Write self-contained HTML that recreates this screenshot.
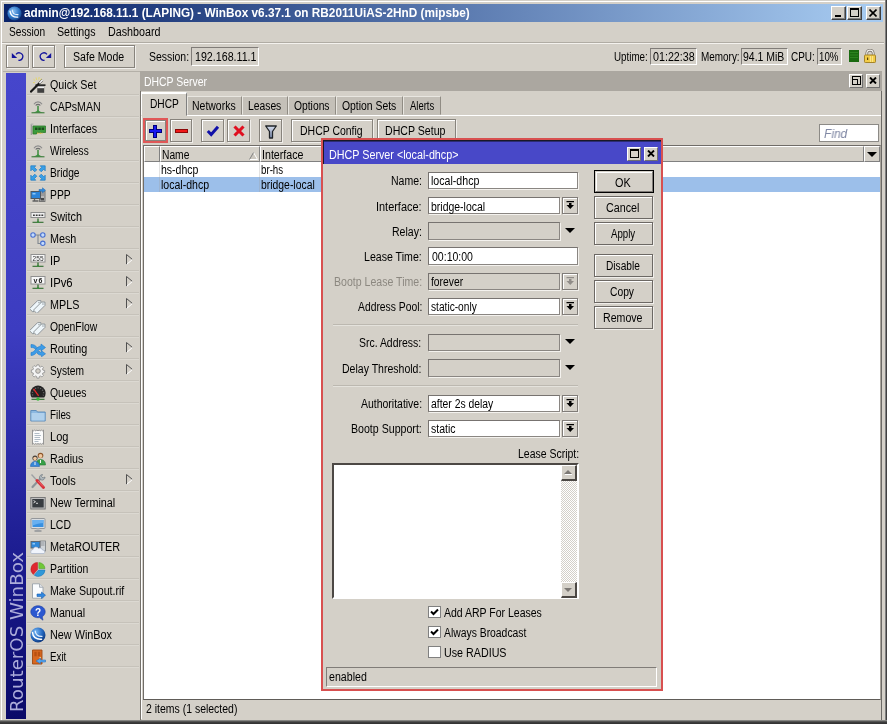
<!DOCTYPE html><html><head><meta charset="utf-8"><title>WinBox</title><style>
*{box-sizing:border-box}
html,body{margin:0;padding:0}
body{width:887px;height:724px;overflow:hidden;position:relative;background:#d4d0c8;font-family:"Liberation Sans",sans-serif;font-size:12px;color:#000;line-height:14px}
#root{position:absolute;left:0;top:0;width:887px;height:724px;will-change:transform}
.a{position:absolute}
.t{position:absolute;white-space:nowrap;line-height:14px;height:14px;transform-origin:0 0}
.btn{position:absolute;background:#d4d0c8;border:1px solid #87837c;box-shadow:inset 1px 1px 0 #fff,1px 1px 0 #f0eeea}
.db{border-color:#6c6864}
.sunk{position:absolute;border:1px solid;border-color:#777370 #8a8682 #8a8682 #777370;background:#fff;box-shadow:1px 1px 0 #f4f2ee}
.sk{position:absolute;border:1px solid;border-color:#807c78 #fff #fff #807c78;background:#d4d0c8}
.sunk2{position:absolute;border:2px solid;border-color:#4c4844 #fff #fff #4c4844;border-right-width:2px;background:#fff}
.dis{background:#d4d0c8}
#frameR{left:884px;top:0;width:3px;height:724px;background:linear-gradient(90deg,#d4d0c8 0,#d4d0c8 1px,#808080 1px,#808080 2px,#404040 2px)}
#frameB{left:0;top:720px;width:887px;height:4px;background:linear-gradient(180deg,#a0a09c 0,#6a6a68 1px,#404040 2px,#303030 4px)}
#title{left:4px;top:4px;width:880px;height:18px;background:linear-gradient(90deg,#0a246a 0%,#0a246a 2%,#a6caf0 98%,#a6caf0 100%)}
#title .t{color:#fff;font-weight:bold;font-size:12.500px;left:20px;top:2px}
.wb{position:absolute;top:2px;width:15px;height:14px;background:#d4d0c8;border:1px solid;border-color:#fff #404040 #404040 #fff;box-shadow:inset -1px -1px 0 #808080}
#side{position:absolute;left:27px;top:73px;width:113px;height:646px}
.mi{position:absolute;left:0;width:112px;height:22px;border-bottom:1px solid #c6c2ba;box-shadow:0 1px 0 #dcd9d2}
.ic{position:absolute;left:3px;top:4px;width:16px;height:16px}
.ic svg{display:block}
.ml{position:absolute;left:23px;top:5px;white-space:nowrap;line-height:14px;transform-origin:0 0}
.arr{position:absolute;left:99px;top:5px;width:7px;height:11px}
#strip{left:6px;top:73px;width:20px;height:646px;background:linear-gradient(180deg,#4646cc 0%,#3c3cc0 40%,#1c1c90 75%,#0a0a68 100%)}
#strip b{position:absolute;left:1px;top:638px;width:0;height:0;transform-origin:0 0;transform:rotate(-90deg);font-weight:normal}
#strip b .t{left:0;top:0;color:#acacda;font-family:'DejaVu Sans',sans-serif;font-size:18px;line-height:20px;height:20px}
.tab{position:absolute;top:96px;height:19px;background:#c4c0b8;border:1px solid;border-color:#e8e6e0 #908c84 transparent #e8e6e0}
.tab .t{top:2px}
.hdr{position:absolute;top:146px;height:16px;background:#d4d0c8;border:1px solid;border-color:#fff #808080 #808080 #fff}
.dd{position:absolute;left:562px;width:16px;height:17px;background:#d4d0c8;border:1px solid #807c78;box-shadow:inset 1px 1px 0 #fff,1px 1px 0 #f0eeea}
.dd svg{position:absolute;left:2px;top:2px}
.tri{position:absolute;left:565px;width:0;height:0;border-top:5px solid #000;border-left:5px solid transparent;border-right:5px solid transparent}
.cb{position:absolute;left:428px;width:13px;height:12px;background:#fff;border:1px solid #808080}
.cb svg{position:absolute;left:1px;top:1px}
.sep{position:absolute;left:333px;width:245px;height:2px;border-top:1px solid #bcb8b0;border-bottom:1px solid #e4e2dc}
.tb{position:absolute;width:14px;height:14px;background:#d4d0c8;border:1px solid;border-color:#fff #707070 #707070 #fff}

</style></head><body><div id="root">
<div class="a" id="frameR"></div>
<div class="a" id="frameB"></div>
<div class="a" style="left:1px;top:1px;width:884px;height:1px;background:#fff"></div>
<div class="a" style="left:1px;top:1px;width:1px;height:719px;background:#fff"></div>
<div class="a" id="title" style="width:879px">
<svg class="a" style="left:2.500px;top:1.500px" width="15" height="15" viewBox="0 0 16 16"><defs><radialGradient id="lg" cx="0.4" cy="0.35" r="0.7"><stop offset="0" stop-color="#8fc4f4"/><stop offset="0.6" stop-color="#2f78c8"/><stop offset="1" stop-color="#123c80"/></radialGradient></defs><circle cx="8" cy="8" r="7.5" fill="url(#lg)"/><path d="M3.200 5.500c.3 4 3.200 6.800 8.300 6.400" fill="none" stroke="#fff" stroke-width="1.400" stroke-linecap="round"/><path d="M5.600 4.200c.2 3 2.300 5.200 6.200 5" fill="none" stroke="#e4f0ff" stroke-width="1.100" stroke-linecap="round"/></svg>
<span class="t" style="margin-left:0.07px;transform:scaleX(0.943)">admin@192.168.11.1 (LAPING) - WinBox v6.37.1 on RB2011UiAS-2HnD (mipsbe)</span>
<div class="wb" style="left:827px"><i class="a" style="left:3px;top:8px;width:6px;height:2px;background:#000"></i></div>
<div class="wb" style="left:843px"><i class="a" style="left:2px;top:1px;width:9px;height:9px;border:1px solid #000;border-top-width:2px"></i></div>
<div class="wb" style="left:862px"><svg class="a" style="left:2px;top:2px" width="8" height="8" viewBox="0 0 8 8"><path d="M0.500 0.500L7.500 7.500M7.500 0.500L0.500 7.500" stroke="#000" stroke-width="1.600"/></svg></div>
</div>
<span class="t" style="left:9px;top:25px;margin-left:-0.02px;transform:scaleX(0.845)">Session</span>
<span class="t" style="left:57.500px;top:25px;margin-left:-0.04px;transform:scaleX(0.888)">Settings</span>
<span class="t" style="left:108px;top:25px;margin-left:-0.45px;transform:scaleX(0.894)">Dashboard</span>
<div class="a" style="left:2px;top:42px;width:882px;height:2px;border-top:1px solid #b0aca4;border-bottom:1px solid #f4f2ee"></div>
<div class="btn" style="left:6px;top:45px;width:23px;height:23px"><svg class="a" style="left:3px;top:3px" width="15" height="14" viewBox="0 0 15 14"><path d="M6.070 5.480A3.700 3.700 0 1 1 8.460 11.240" fill="none" stroke="#14149c" stroke-width="1.300"/><path d="M1.800 4L1.800 8.900L7.200 8.900z" fill="#14149c"/></svg></div>
<div class="btn" style="left:32px;top:45px;width:23px;height:23px"><svg class="a" style="left:4.500px;top:3px" width="15" height="14" viewBox="0 0 15 14"><g transform="translate(15,0) scale(-1,1)"><path d="M6.070 5.480A3.700 3.700 0 1 1 8.460 11.240" fill="none" stroke="#14149c" stroke-width="1.300"/><path d="M1.800 4L1.800 8.900L7.200 8.900z" fill="#14149c"/></g></svg></div>
<div class="btn" style="left:64px;top:45px;width:71px;height:23px"><span class="t" style="left:8px;top:4px;margin-left:-0.04px;transform:scaleX(0.882)">Safe Mode</span></div>
<span class="t" style="left:149px;top:50px;margin-left:-0.04px;transform:scaleX(0.871)">Session:</span>
<div class="sk" style="left:191px;top:47px;width:68px;height:19px"><span class="t" style="left:3.500px;top:2px;margin-left:-0.40px;transform:scaleX(0.889)">192.168.11.1</span></div>
<span class="t" style="left:614.500px;top:50px;margin-left:-0.33px;transform:scaleX(0.816)">Uptime:</span>
<div class="sk" style="left:650px;top:48px;width:47px;height:17px"><span class="t" style="left:1.500px;top:1px;margin-left:-0.00px;transform:scaleX(0.893)">01:22:38</span></div>
<span class="t" style="left:701.500px;top:50px;margin-left:-0.39px;transform:scaleX(0.827)">Memory:</span>
<div class="sk" style="left:741px;top:48px;width:47px;height:17px"><span class="t" style="left:1.500px;top:1px;margin-left:-0.08px;transform:scaleX(0.872)">94.1 MiB</span></div>
<span class="t" style="left:791.500px;top:50px;margin-left:-0.10px;transform:scaleX(0.830)">CPU:</span>
<div class="sk" style="left:817px;top:48px;width:25px;height:17px"><span class="t" style="left:1.500px;top:1px;margin-left:-0.33px;transform:scaleX(0.806)">10%</span></div>
<svg class="a" style="left:849px;top:50px" width="10" height="12" viewBox="0 0 10 12"><rect width="10" height="12" fill="#1a6a10"/><path d="M1 2.500h8M1 5h8M1 7.500h8" stroke="#2c8420" stroke-width="1"/></svg>
<svg class="a" style="left:863px;top:49px" width="14" height="14" viewBox="0 0 14 14"><path d="M3.800 6.500V4.300a3.200 3.200 0 0 1 6.400 0V6.500" fill="none" stroke="#6c645c" stroke-width="2.600"/><path d="M3.800 6.500V4.300a3.200 3.200 0 0 1 6.400 0V6.500" fill="none" stroke="#f4f4f0" stroke-width="1.200"/><rect x="1.500" y="6" width="11" height="7.500" rx="0.800" fill="#f2cc48" stroke="#a48428" stroke-width="1"/><path d="M7.500 7v6M9.500 7v6" stroke="#fbe488" stroke-width="1"/><rect x="4" y="8.500" width="1.200" height="2.500" fill="#5c4408"/></svg>
<div class="a" style="left:3px;top:71px;width:138px;height:1px;background:#b4b0a8"></div>
<div class="a" id="strip"><b><span class="t" style="margin-left:-1.31px;transform:scaleX(1.011)">RouterOS WinBox</span></b></div>

<div id="side">
<div class="mi" style="top:0px"><span class="ic"><svg width="16" height="16" viewBox="0 0 16 16"><path d="M6 0.500l.7 2.500M9.200 0l-.5 2.600M3.500 2.200l1.800 1.600M11.500 1.500l-1.500 1.800M3 5.500l2 .3" stroke="#e8d860" stroke-width="0.900"/><path d="M5.500 7.300h10v1.700h-10z" fill="#282828"/><path d="M7.300 9h6.900v6.800H7.300z" fill="#404040"/><path d="M7.300 9.300h6.900v1.900H7.300z" fill="#f0f0f0"/><path d="M0.300 15.300L12.500 3" stroke="#181818" stroke-width="2.100"/><path d="M9.300 6.200L12.600 2.900" stroke="#f8f8f8" stroke-width="1.500"/></svg></span><span class="ml" style="transform:scaleX(0.891)">Quick Set</span></div>
<div class="mi" style="top:22px"><span class="ic"><svg width="16" height="16" viewBox="0 0 16 16"><path d="M4 5.200a4.600 4.600 0 0 1 8 0" fill="none" stroke="#8c8c8c" stroke-width="1.200"/><path d="M5.700 6.500a2.800 2.800 0 0 1 4.600 0" fill="none" stroke="#707070" stroke-width="1.200"/><path d="M8 6.800v6" stroke="#3c8c3c" stroke-width="1.500"/><path d="M2 13.600c3-.4 4.500-1.200 6-2.600c1.500 1.400 3 2.200 6 2.600z" fill="#3c9440"/><path d="M1.500 13.800h13" stroke="#2c742c" stroke-width="1"/></svg></span><span class="ml" style="transform:scaleX(0.884)">CAPsMAN</span></div>
<div class="mi" style="top:44px"><span class="ic"><svg width="16" height="16" viewBox="0 0 16 16"><path d="M1.500 3v11" stroke="#9c9c9c" stroke-width="1.600"/><path d="M1 3h2.500" stroke="#b8b8b8" stroke-width="1.200"/><path d="M3 5h12.500v6.500H6.500V13H3z" fill="#3c9c3c" stroke="#2a7a2a" stroke-width="0.800"/><path d="M5 6.500h2.500v2.500H5zM8.300 6.500h2.500v2.500H8.300zM11.600 6.500h2.500v2.500H11.600z" fill="#1c4c1c"/><path d="M7.500 11.500v1.500M9 11.500v1.500M10.500 11.500v1.500M12 11.500v1.500" stroke="#d8c040" stroke-width="0.800"/></svg></span><span class="ml" style="transform:scaleX(0.895)">Interfaces</span></div>
<div class="mi" style="top:66px"><span class="ic"><svg width="16" height="16" viewBox="0 0 16 16"><path d="M4 5.200a4.600 4.600 0 0 1 8 0" fill="none" stroke="#8c8c8c" stroke-width="1.200"/><path d="M5.700 6.500a2.800 2.800 0 0 1 4.600 0" fill="none" stroke="#707070" stroke-width="1.200"/><path d="M8 6.800v6" stroke="#3c8c3c" stroke-width="1.500"/><path d="M2 13.600c3-.4 4.500-1.200 6-2.600c1.500 1.400 3 2.200 6 2.600z" fill="#3c9440"/><path d="M1.500 13.800h13" stroke="#2c742c" stroke-width="1"/></svg></span><span class="ml" style="transform:scaleX(0.841)">Wireless</span></div>
<div class="mi" style="top:88px"><span class="ic"><svg width="16" height="16" viewBox="0 0 16 16"><g fill="#38a0e8" stroke="#1c78c0" stroke-width="0.700" stroke-linejoin="round"><path d="M0.800 0.800h5L4.300 2.300l2.500 2.500l-2 2L2.300 4.300L0.800 5.800z"/><path d="M15.200 0.800v5L13.700 4.300l-2.500 2.500l-2-2l2.500-2.500L10.200 0.800z"/><path d="M0.800 15.200v-5l1.500 1.500l2.500-2.500l2 2l-2.500 2.500l1.500 1.500z"/><path d="M15.200 15.200h-5l1.500-1.500l-2.500-2.500l2-2l2.500 2.500l1.500-1.500z"/></g></svg></span><span class="ml" style="transform:scaleX(0.852)">Bridge</span></div>
<div class="mi" style="top:110px"><span class="ic"><svg width="16" height="16" viewBox="0 0 16 16"><rect x="9.500" y="4" width="5.500" height="10.500" fill="#b8b8b8" stroke="#606060" stroke-width="0.800"/><rect x="10.500" y="11" width="3.500" height="2.500" fill="#484848"/><path d="M10.500 6h3.500M10.500 8h3.500" stroke="#707070" stroke-width="0.800"/><rect x="1" y="4.500" width="9.500" height="7" fill="#2c84d8" stroke="#505860" stroke-width="1"/><path d="M2.500 6h3v1.500h-3z" fill="#8cc8f8"/><path d="M4.500 11.500v2M2.500 14h6" stroke="#606060" stroke-width="1.300"/><path d="M9 2.500h3.500V0.800L15.500 3.300L12.500 5.800V4.200H9z" fill="#2c8ce0" stroke="#1c64b0" stroke-width="0.500"/></svg></span><span class="ml" style="transform:scaleX(0.859)">PPP</span></div>
<div class="mi" style="top:132px"><span class="ic"><svg width="16" height="16" viewBox="0 0 16 16"><rect x="1" y="3.500" width="14" height="5" fill="#f0f0f0" stroke="#8c8c8c" stroke-width="1"/><path d="M3 5.500h1.800v1.500H3zM5.800 5.500h1.800v1.500H5.800zM8.600 5.500h1.800v1.500H8.600zM11.400 5.500h1.800v1.500h-1.800z" fill="#383838"/><path d="M8 9.500v3.500" stroke="#2c6c2c" stroke-width="1.300"/><path d="M2.500 13.300h11" stroke="#2c6c2c" stroke-width="1.100"/><circle cx="8" cy="13" r="1.100" fill="#3c8c3c"/></svg></span><span class="ml" style="transform:scaleX(0.904)">Switch</span></div>
<div class="mi" style="top:154px"><span class="ic"><svg width="16" height="16" viewBox="0 0 16 16"><path d="M4.500 4h7M8 4v8.500h3" fill="none" stroke="#808890" stroke-width="1.100"/><circle cx="3" cy="4" r="2.200" fill="#c4dcfc" stroke="#4870d0" stroke-width="1.100"/><circle cx="12.800" cy="4" r="2.200" fill="#c4dcfc" stroke="#4870d0" stroke-width="1.100"/><circle cx="12.800" cy="12.300" r="2.200" fill="#c4dcfc" stroke="#4870d0" stroke-width="1.100"/></svg></span><span class="ml" style="transform:scaleX(0.898)">Mesh</span></div>
<div class="mi" style="top:176px"><span class="ic"><svg width="16" height="16" viewBox="0 0 16 16"><rect x="1" y="1.500" width="14" height="7.500" fill="#f8f8f8" stroke="#909090" stroke-width="1"/><text x="8" y="7.800" font-family="Liberation Sans,sans-serif" font-size="6.500" text-anchor="middle" fill="#303030" textLength="11">255</text><path d="M8 9.500v3.500" stroke="#2c6c2c" stroke-width="1.300"/><path d="M2.500 13.300h11" stroke="#2c6c2c" stroke-width="1.100"/><circle cx="8" cy="13" r="1.100" fill="#3c8c3c"/></svg></span><span class="ml" style="transform:scaleX(0.913)">IP</span><svg class="arr" viewBox="0 0 7 11"><path d="M0.500 0.500V10.500" stroke="#505050" stroke-width="1" fill="none"/><path d="M0.500 0.500L6.500 5.500" stroke="#505050" stroke-width="1" fill="none"/><path d="M6.500 5.500L0.500 10.500" stroke="#fff" stroke-width="1" fill="none"/></svg></div>
<div class="mi" style="top:198px"><span class="ic"><svg width="16" height="16" viewBox="0 0 16 16"><rect x="1" y="1.500" width="14" height="7.500" fill="#f8f8f8" stroke="#909090" stroke-width="1"/><text x="8" y="7.800" font-family="Liberation Sans,sans-serif" font-size="7" font-weight="bold" text-anchor="middle" fill="#202020" textLength="9">v6</text><path d="M8 9.500v3.500" stroke="#2c6c2c" stroke-width="1.300"/><path d="M2.500 13.300h11" stroke="#2c6c2c" stroke-width="1.100"/><circle cx="8" cy="13" r="1.100" fill="#3c8c3c"/></svg></span><span class="ml" style="transform:scaleX(0.942)">IPv6</span><svg class="arr" viewBox="0 0 7 11"><path d="M0.500 0.500V10.500" stroke="#505050" stroke-width="1" fill="none"/><path d="M0.500 0.500L6.500 5.500" stroke="#505050" stroke-width="1" fill="none"/><path d="M6.500 5.500L0.500 10.500" stroke="#fff" stroke-width="1" fill="none"/></svg></div>
<div class="mi" style="top:220px"><span class="ic"><svg width="16" height="16" viewBox="0 0 16 16"><g fill="#eef6fa" stroke="#8a9296" stroke-width="0.900" stroke-linejoin="round"><g transform="translate(6,8.600) rotate(45)"><path d="M-2.400 6.800V-4.600L0 -7L2.400 -4.600V6.800z"/><circle cx="0" cy="-4.200" r="0.700" fill="#8a9296" stroke="none"/></g><g transform="translate(10,10) rotate(45)"><path d="M-2.400 6.800V-4.600L0 -7L2.400 -4.600V6.800z"/><circle cx="0" cy="-4.200" r="0.700" fill="#8a9296" stroke="none"/></g></g></svg></span><span class="ml" style="transform:scaleX(0.897)">MPLS</span><svg class="arr" viewBox="0 0 7 11"><path d="M0.500 0.500V10.500" stroke="#505050" stroke-width="1" fill="none"/><path d="M0.500 0.500L6.500 5.500" stroke="#505050" stroke-width="1" fill="none"/><path d="M6.500 5.500L0.500 10.500" stroke="#fff" stroke-width="1" fill="none"/></svg></div>
<div class="mi" style="top:242px"><span class="ic"><svg width="16" height="16" viewBox="0 0 16 16"><g fill="#eef6fa" stroke="#8a9296" stroke-width="0.900" stroke-linejoin="round"><g transform="translate(6,8.600) rotate(45)"><path d="M-2.400 6.800V-4.600L0 -7L2.400 -4.600V6.800z"/><circle cx="0" cy="-4.200" r="0.700" fill="#8a9296" stroke="none"/></g><g transform="translate(10,10) rotate(45)"><path d="M-2.400 6.800V-4.600L0 -7L2.400 -4.600V6.800z"/><circle cx="0" cy="-4.200" r="0.700" fill="#8a9296" stroke="none"/></g></g></svg></span><span class="ml" style="transform:scaleX(0.864)">OpenFlow</span></div>
<div class="mi" style="top:264px"><span class="ic"><svg width="16" height="16" viewBox="0 0 16 16"><g fill="#3c9ce8" stroke="#2078c8" stroke-width="0.600" stroke-linejoin="round"><path d="M1 11.500c4 0 5-6 10-6.500V3l4.500 3.500L11 10V8c-3.500.5-4.500 6.500-10 6.500z"/><path d="M1 3.500c3 0 4.500 1 6 3l-1.500 2C4.500 7 3.500 6.500 1 6.500zM9 10c1 1 1.500 1.200 2.500 1.300V9.800l4 3l-4 3v-1.500c-2-.1-3.500-1-4.500-2.300z"/></g></svg></span><span class="ml" style="transform:scaleX(0.900)">Routing</span><svg class="arr" viewBox="0 0 7 11"><path d="M0.500 0.500V10.500" stroke="#505050" stroke-width="1" fill="none"/><path d="M0.500 0.500L6.500 5.500" stroke="#505050" stroke-width="1" fill="none"/><path d="M6.500 5.500L0.500 10.500" stroke="#fff" stroke-width="1" fill="none"/></svg></div>
<div class="mi" style="top:286px"><span class="ic"><svg width="16" height="16" viewBox="0 0 16 16"><path d="M6.800 1h2.400l.4 2l1.200.5l1.700-1.100l1.700 1.700l-1.100 1.700l.5 1.200l2 .4v2.400l-2 .4l-.5 1.200l1.100 1.700l-1.700 1.700l-1.700-1.100l-1.200.5l-.4 2H6.800l-.4-2l-1.200-.5l-1.700 1.100l-1.700-1.700l1.100-1.700l-.5-1.200l-2-.4V6.800l2-.4l.5-1.200L1.800 3.500l1.700-1.700l1.700 1.100l1.200-.5z" fill="#f4f4f4" stroke="#8c8c8c" stroke-width="0.900" stroke-linejoin="round" transform="translate(1,1) scale(0.875)"/><circle cx="8" cy="8" r="2.300" fill="#d4d0c8" stroke="#8c8c8c" stroke-width="0.900"/></svg></span><span class="ml" style="transform:scaleX(0.851)">System</span><svg class="arr" viewBox="0 0 7 11"><path d="M0.500 0.500V10.500" stroke="#505050" stroke-width="1" fill="none"/><path d="M0.500 0.500L6.500 5.500" stroke="#505050" stroke-width="1" fill="none"/><path d="M6.500 5.500L0.500 10.500" stroke="#fff" stroke-width="1" fill="none"/></svg></div>
<div class="mi" style="top:308px"><span class="ic"><svg width="16" height="16" viewBox="0 0 16 16"><path d="M1.800 12.600A7.600 7.600 0 1 1 14.200 12.600z" fill="#242424"/><path d="M2.800 10.500A5.600 5.600 0 1 1 13.200 10.500" fill="none" stroke="#686868" stroke-width="1.300" stroke-dasharray="1.100 1.500"/><path d="M3.600 3.800L8.600 10.800" stroke="#e82828" stroke-width="1.300"/><path d="M1.500 14.300h13" stroke="#2c6c2c" stroke-width="1.100"/><circle cx="8" cy="14" r="1.700" fill="#38b838"/></svg></span><span class="ml" style="transform:scaleX(0.869)">Queues</span></div>
<div class="mi" style="top:330px"><span class="ic"><svg width="16" height="16" viewBox="0 0 16 16"><path d="M0.800 3.500h5.500l1.200 1.500h7.700V14H0.800z" fill="#8cb8e0" stroke="#5888b8" stroke-width="0.900" stroke-linejoin="round"/><path d="M1.500 6h13v7.500h-13z" fill="#b0d0ec"/></svg></span><span class="ml" style="transform:scaleX(0.821)">Files</span></div>
<div class="mi" style="top:352px"><span class="ic"><svg width="16" height="16" viewBox="0 0 16 16"><path d="M2.500 1l1.100 .9l1.100-.9l1.100 .9l1.100-.9l1.100 .9l1.100-.9l1.100 .9l1.100-.9l1.100 .9l1.100-.9V15.300l-1.100-.9l-1.100 .9l-1.100-.9l-1.100 .9l-1.100-.9l-1.100 .9l-1.100-.9l-1.100 .9l-1.100-.9l-1.100 .9z" fill="#fbfbfb" stroke="#8c8c8c" stroke-width="0.900" stroke-linejoin="round"/><path d="M4.500 4.500h5M4.500 6.500h6.500M4.500 8.500h5.500M4.500 10.500h6M4.500 12.500h4" stroke="#a8b4c0" stroke-width="0.900"/></svg></span><span class="ml" style="transform:scaleX(0.921)">Log</span></div>
<div class="mi" style="top:374px"><span class="ic"><svg width="16" height="16" viewBox="0 0 16 16"><circle cx="10.500" cy="4.500" r="2.800" fill="#8c5428"/><circle cx="10.500" cy="5" r="1.900" fill="#f0c8a0"/><path d="M6 14c0-4 2-5.500 4.500-5.500S15.500 10 15.500 14z" fill="#38a048" stroke="#287838" stroke-width="0.600"/><path d="M10 9h1v3h-1z" fill="#f4f4f4"/><circle cx="5" cy="7" r="2.600" fill="#484038"/><circle cx="5" cy="7.600" r="1.800" fill="#f0c8a0"/><path d="M0.500 15.500c0-3.500 2-5 4.500-5s4.500 1.500 4.500 5z" fill="#3888d8" stroke="#2868b0" stroke-width="0.600"/><path d="M4.500 11h1v3h-1z" fill="#f4f4f4"/></svg></span><span class="ml" style="transform:scaleX(0.892)">Radius</span></div>
<div class="mi" style="top:396px"><span class="ic"><svg width="16" height="16" viewBox="0 0 16 16"><path d="M2.500 14L10.500 5.500" stroke="#8c9498" stroke-width="2.200" stroke-linecap="round"/><path d="M9.500 5a3 3 0 0 1 3-3.500l-1 2l1.500 1.500l2-1a3 3 0 0 1-3.800 3z" fill="#b0b8bc" stroke="#707880" stroke-width="0.700"/><path d="M1.500 1.500L7 7.500" stroke="#9ca0a4" stroke-width="1.300"/><path d="M7 7.500L13.500 14.500" stroke="#d83038" stroke-width="2.800" stroke-linecap="round"/><path d="M8 8L13 13.500" stroke="#f07078" stroke-width="0.800"/></svg></span><span class="ml" style="transform:scaleX(0.921)">Tools</span><svg class="arr" viewBox="0 0 7 11"><path d="M0.500 0.500V10.500" stroke="#505050" stroke-width="1" fill="none"/><path d="M0.500 0.500L6.500 5.500" stroke="#505050" stroke-width="1" fill="none"/><path d="M6.500 5.500L0.500 10.500" stroke="#fff" stroke-width="1" fill="none"/></svg></div>
<div class="mi" style="top:418px"><span class="ic"><svg width="16" height="16" viewBox="0 0 16 16"><rect x="0.800" y="2.500" width="14.400" height="11.500" fill="#c0c0c0" stroke="#707070" stroke-width="0.900"/><rect x="2.300" y="4" width="11.400" height="8.500" fill="#383c40"/><path d="M3.500 5.500l2 1.200l-2 1.200" fill="none" stroke="#e8e8e8" stroke-width="0.900"/><path d="M6 8.300h2" stroke="#e8e8e8" stroke-width="0.900"/></svg></span><span class="ml" style="transform:scaleX(0.900)">New Terminal</span></div>
<div class="mi" style="top:440px"><span class="ic"><svg width="16" height="16" viewBox="0 0 16 16"><rect x="1" y="1.500" width="14" height="10" rx="0.800" fill="#d8dce0" stroke="#8c9094" stroke-width="0.900"/><rect x="2.500" y="3" width="11" height="7" fill="#3890e0"/><path d="M2.500 3h11v3c-4 0-7 1-11 2.500z" fill="#68b0f0"/><path d="M6.500 11.500h3v2h-3z" fill="#b8bcc0"/><path d="M4.500 14h7" stroke="#8c9094" stroke-width="1.400"/></svg></span><span class="ml" style="transform:scaleX(0.876)">LCD</span></div>
<div class="mi" style="top:462px"><span class="ic"><svg width="16" height="16" viewBox="0 0 16 16"><rect x="10" y="2" width="5.500" height="10" fill="#d0d4d8" stroke="#787c80" stroke-width="0.800"/><path d="M11 4h3.500M11 6h3.500" stroke="#808488" stroke-width="0.800"/><rect x="1" y="2.500" width="9" height="6.500" fill="#3088d8" stroke="#606468" stroke-width="0.900"/><path d="M2.500 4h2.500v1.500H2.500z" fill="#90c8f8"/><path d="M1.500 14.500a2.300 2.300 0 0 1 1.500-4a3 3 0 0 1 5.500-1a2.600 2.600 0 0 1 4 1.500a2 2 0 0 1 1.500 3.500z" fill="#f0f4fc" stroke="#a8b4cc" stroke-width="0.700"/></svg></span><span class="ml" style="transform:scaleX(0.908)">MetaROUTER</span></div>
<div class="mi" style="top:484px"><span class="ic"><svg width="16" height="16" viewBox="0 0 16 16"><path d="M7.500 8.500L3.300 13.500A6.800 6.800 0 0 1 7.500 1.500z" fill="#e02830" stroke="#b01820" stroke-width="0.500"/><path d="M8.800 7.500V1.500a6.500 6.500 0 0 1 6.200 6z" fill="#70c838" stroke="#489820" stroke-width="0.500"/><path d="M8.500 9h6.500a6.800 6.800 0 0 1-10.800 5.200z" fill="#3098d8" stroke="#1870b0" stroke-width="0.500"/></svg></span><span class="ml" style="transform:scaleX(0.870)">Partition</span></div>
<div class="mi" style="top:506px"><span class="ic"><svg width="16" height="16" viewBox="0 0 16 16"><path d="M2.500 0.800h7l3.500 3.500V15.200H2.500z" fill="#fafcfe" stroke="#98a0a8" stroke-width="0.900" stroke-linejoin="round"/><path d="M9.500 0.800v3.500H13" fill="#e0e4e8" stroke="#98a0a8" stroke-width="0.800"/><path d="M7 11h4.500V9L15.500 12.200L11.500 15.500V13.500H7z" fill="#3088e0" stroke="#1c60b0" stroke-width="0.600" stroke-linejoin="round"/></svg></span><span class="ml" style="transform:scaleX(0.884)">Make Supout.rif</span></div>
<div class="mi" style="top:528px"><span class="ic"><svg width="16" height="16" viewBox="0 0 16 16"><path d="M8 0.800c4 0 7.200 2.600 7.200 6c0 2-1.200 3.800-3 4.900l.8 3.500l-3.500-2.600c-.5.100-1 .1-1.500.1c-4 0-7.200-2.600-7.200-5.900s3.200-6 7.200-6z" fill="#2c58d0" stroke="#1c3ca0" stroke-width="0.600"/><text x="8" y="10.500" font-family="Liberation Sans,sans-serif" font-size="10" font-weight="bold" text-anchor="middle" fill="#fff">?</text></svg></span><span class="ml" style="transform:scaleX(0.890)">Manual</span></div>
<div class="mi" style="top:550px"><span class="ic"><svg width="16" height="16" viewBox="0 0 16 16"><defs><radialGradient id="wg" cx="0.35" cy="0.3" r="0.8"><stop offset="0" stop-color="#78b8f4"/><stop offset="0.55" stop-color="#2468c0"/><stop offset="1" stop-color="#0c3070"/></radialGradient></defs><circle cx="8" cy="8" r="7.500" fill="url(#wg)"/><path d="M2.500 5.500c.3 4.300 3.500 7.300 9 6.800" fill="none" stroke="#fff" stroke-width="1.500" stroke-linecap="round"/><path d="M5.200 4c.2 3.200 2.500 5.600 6.800 5.300" fill="none" stroke="#e4f0ff" stroke-width="1.200" stroke-linecap="round"/></svg></span><span class="ml" style="transform:scaleX(0.903)">New WinBox</span></div>
<div class="mi" style="top:572px"><span class="ic"><svg width="16" height="16" viewBox="0 0 16 16"><path d="M2.500 1h9.500v14H2.500z" fill="#d86820" stroke="#a04810" stroke-width="0.900"/><path d="M4.300 2.800h2.400v4.500H4.300zM7.800 2.800h2.400v4.500H7.800z" fill="#b85010"/><circle cx="10.200" cy="8.800" r="0.800" fill="#f8e0a0"/><path d="M15.500 11h-5V9.300L6 12l4.500 2.700V13h5z" fill="#58a8f0" stroke="#2870c0" stroke-width="0.600" stroke-linejoin="round"/></svg></span><span class="ml" style="transform:scaleX(0.817)">Exit</span></div>
</div>
<!-- MDI child -->
<div class="a" style="left:881px;top:71px;width:1px;height:649px;background:#6c6a66"></div>
<div class="a" style="left:140px;top:71px;width:742px;height:20px;background:#aba7a0"></div>
<div class="a" style="left:140px;top:91px;width:1px;height:629px;background:#76726c"></div>
<span class="t" style="left:144.500px;top:75px;color:#fff;margin-left:-0.43px;transform:scaleX(0.870)">DHCP Server</span>
<div class="tb" style="left:849px;top:74px"><i class="a" style="left:2px;top:1px;width:9px;height:9px;border:1px solid #000"></i><i class="a" style="left:2px;top:4px;width:6px;height:6px;border:1px solid #000;background:#d4d0c8"></i></div>
<div class="tb" style="left:866px;top:74px"><svg class="a" style="left:2px;top:2px" width="8" height="7" viewBox="0 0 8 7"><path d="M1 0.500L7 6.500M7 0.500L1 6.500" stroke="#000" stroke-width="1.900"/></svg></div>
<!-- tabs -->
<div class="a" style="left:142px;top:115px;width:739px;height:1px;background:#fff"></div>
<div class="a" style="left:141px;top:93px;width:1px;height:626px;background:#fff"></div>
<div class="tab" style="left:187px;width:55px"><span class="t" style="left:4px;margin-left:-0.43px;transform:scaleX(0.873)">Networks</span></div>
<div class="tab" style="left:242px;width:46px"><span class="t" style="left:5.500px;margin-left:-0.42px;transform:scaleX(0.860)">Leases</span></div>
<div class="tab" style="left:288px;width:48px"><span class="t" style="left:5px;margin-left:-0.07px;transform:scaleX(0.859)">Options</span></div>
<div class="tab" style="left:336px;width:67px"><span class="t" style="left:5px;margin-left:-0.08px;transform:scaleX(0.866)">Option Sets</span></div>
<div class="tab" style="left:403px;width:38px"><span class="t" style="left:5.500px;margin-left:0.40px;transform:scaleX(0.789)">Alerts</span></div>
<div class="tab" style="left:141px;top:92px;width:46px;height:24px;background:#d4d0c8;border-color:#fff #808080 transparent #fff;border-top-width:2px"><span class="t" style="left:8px;top:3px;margin-left:-0.41px;transform:scaleX(0.851)">DHCP</span></div>
<!-- toolbar -->
<div class="btn" style="left:145px;top:120px;width:21px;height:21px"><i class="a" style="left:7px;top:4px;width:4px;height:13px;background:#00007c"></i><i class="a" style="left:3px;top:8px;width:13px;height:4px;background:#00007c"></i><i class="a" style="left:8px;top:5px;width:2px;height:11px;background:#1818f0"></i><i class="a" style="left:4px;top:9px;width:11px;height:2px;background:#1818f0"></i></div>
<div class="a" style="left:143px;top:118px;width:25px;height:25px;border:2px solid #e05858"></div>
<div class="btn" style="left:170px;top:119px;width:22px;height:23px"><i class="a" style="left:4px;top:9px;width:13px;height:4px;background:#8c0808"></i><i class="a" style="left:5px;top:10px;width:11px;height:2px;background:#f01818"></i></div>
<div class="btn" style="left:201px;top:119px;width:23px;height:23px"><svg class="a" style="left:4px;top:5px" width="14" height="12" viewBox="0 0 14 12"><path d="M1.800 6L5.200 9.500L12 1.800" fill="none" stroke="#1010a8" stroke-width="3"/></svg></div>
<div class="btn" style="left:227px;top:119px;width:23px;height:23px"><svg class="a" style="left:4.500px;top:5px" width="12" height="12" viewBox="0 0 12 12"><path d="M1.500 1.500L10.500 10.500M10.500 1.500L1.500 10.500" fill="none" stroke="#e01020" stroke-width="3.100"/></svg></div>
<div class="btn" style="left:259px;top:119px;width:23px;height:23px"><svg class="a" style="left:5px;top:5px" width="12" height="14" viewBox="0 0 12 14"><defs><linearGradient id="fg" x1="0" y1="0" x2="0" y2="1"><stop offset="0" stop-color="#d4dcec"/><stop offset="1" stop-color="#7c8cb0"/></linearGradient></defs><path d="M0.700 1h10.600L7.500 6.500V13H4.500V6.500z" fill="url(#fg)" stroke="#202428" stroke-width="1.300" stroke-linejoin="round"/></svg></div>
<div class="btn" style="left:291px;top:119px;width:82px;height:23px"><span class="t" style="left:8.500px;top:4px;margin-left:-0.43px;transform:scaleX(0.873)">DHCP Config</span></div>
<div class="btn" style="left:377px;top:119px;width:79px;height:23px"><span class="t" style="left:7.500px;top:4px;margin-left:-0.44px;transform:scaleX(0.882)">DHCP Setup</span></div>
<div class="a" style="left:819px;top:124px;width:60px;height:18px;background:#fff;border:1px solid #8c8a86"><span class="t" style="left:3.500px;top:2px;color:#8088a4;font-style:italic;font-size:12.500px;margin-left:0.06px;transform:scaleX(0.958)">Find</span></div>
<!-- table -->
<div class="a" style="left:143px;top:145px;width:738px;height:555px;background:#fff;border:1px solid;border-color:#706c68 #a8a49c #605c58 #706c68"></div>
<div class="hdr" style="left:144px;width:16px"></div>
<div class="hdr" style="left:160px;width:100px"><span class="t" style="left:1.500px;top:1px;margin-left:-0.41px;transform:scaleX(0.855)">Name</span><svg class="a" style="left:88px;top:5px" width="9" height="8" viewBox="0 0 9 8"><path d="M4.500 0.500L8.500 7.500H0.500z" fill="#ccc8c0"/><path d="M4.500 0.500L8.500 7.500H0.500" stroke="#fff" stroke-width="1" fill="none"/><path d="M4.500 0.500L0.500 7.500" stroke="#808080" stroke-width="1" fill="none"/></svg></div>
<div class="hdr" style="left:260px;width:604px"><span class="t" style="left:1.500px;top:1px;margin-left:-0.58px;transform:scaleX(0.888)">Interface</span></div>
<div class="hdr" style="left:864px;width:16px"><i class="a" style="left:2px;top:5px;width:0;height:0;border-top:5px solid #000;border-left:5px solid transparent;border-right:5px solid transparent"></i></div>
<span class="t" style="left:161.500px;top:163px;margin-left:-0.30px;transform:scaleX(0.876)">hs-dhcp</span>
<span class="t" style="left:261.500px;top:163px;margin-left:-0.21px;transform:scaleX(0.809)">br-hs</span>
<div class="a" style="left:144px;top:177px;width:736px;height:15px;background:#9cbfea"></div>
<span class="t" style="left:161.500px;top:178px;margin-left:-0.30px;transform:scaleX(0.880)">local-dhcp</span>
<span class="t" style="left:261.500px;top:178px;margin-left:-0.25px;transform:scaleX(0.866)">bridge-local</span>
<div class="a" style="left:159px;top:162px;width:1px;height:30px;background:rgba(160,160,160,0.300)"></div><div class="a" style="left:259px;top:162px;width:1px;height:30px;background:rgba(160,160,160,0.300)"></div>
<span class="t" style="left:146px;top:702px;margin-left:-0.12px;transform:scaleX(0.873)">2 items (1 selected)</span>
<!-- dialog -->
<div class="a" style="left:321px;top:138px;width:342px;height:553px;background:#d4d0c8;border:2px solid #d85050"></div>
<div class="a" style="left:323px;top:140px;width:338px;height:24px;background:linear-gradient(180deg,#2c2c74 0,#2c2c74 1px,#4848c8 1px);border-top:1px solid #181828;border-left:1px solid #181828"></div>
<span class="t" style="left:329px;top:148px;color:#fff;margin-left:-0.45px;transform:scaleX(0.896)">DHCP Server &lt;local-dhcp&gt;</span>
<div class="tb" style="left:627px;top:147px"><i class="a" style="left:2px;top:1px;width:9px;height:9px;border:1px solid #000;border-top-width:2px"></i></div>
<div class="tb" style="left:644px;top:147px"><svg class="a" style="left:2px;top:2px" width="8" height="7" viewBox="0 0 8 7"><path d="M1 0.500L7 6.500M7 0.500L1 6.500" stroke="#000" stroke-width="1.900"/></svg></div>
<!-- fields -->
<span class="t" style="left:391.400px;top:174px;margin-left:-0.43px;transform:scaleX(0.877)">Name:</span>
<div class="sunk" style="left:428px;top:172px;width:150px;height:17px"><span class="t" style="left:2px;top:1px;margin-left:-0.31px;transform:scaleX(0.884)">local-dhcp</span></div>
<span class="t" style="left:377px;top:200px;margin-left:-0.60px;transform:scaleX(0.911)">Interface:</span>
<div class="sunk" style="left:428px;top:197px;width:132px;height:17px"><span class="t" style="left:2px;top:2px;margin-left:-0.25px;transform:scaleX(0.872)">bridge-local</span></div><div class="dd" style="top:197px"><svg width="10" height="11" viewBox="0 0 10 11"><path d="M1.500 1h7.500v1.200H1.500zM4 3h2.500v2H9L5.250 9L1.500 5H4z" fill="#000"/></svg></div>
<span class="t" style="left:392.500px;top:225px;margin-left:-0.43px;transform:scaleX(0.879)">Relay:</span>
<div class="sunk dis" style="left:428px;top:222px;width:132px;height:18px"></div><i class="tri" style="top:228px"></i>
<span class="t" style="left:364.500px;top:250px;margin-left:-0.44px;transform:scaleX(0.883)">Lease Time:</span>
<div class="sunk" style="left:428px;top:247px;width:150px;height:18px"><span class="t" style="left:3px;top:2px;margin-left:0.01px;transform:scaleX(0.877)">00:10:00</span></div>
<span class="t" style="left:334px;top:275px;color:#8c8880;margin-left:-0.44px;transform:scaleX(0.881)">Bootp Lease Time:</span>
<div class="sunk dis" style="left:428px;top:273px;width:132px;height:17px"><span class="t" style="left:2px;top:1px;margin-left:0.27px;transform:scaleX(0.859)">forever</span></div><div class="dd" style="top:273px"><svg width="10" height="11" viewBox="0 0 10 11"><path d="M1.500 1h7.500v1.200H1.500zM4 3h2.500v2H9L5.250 9L1.500 5H4z" fill="#908c88"/></svg></div>
<span class="t" style="left:357.200px;top:300px;margin-left:0.40px;transform:scaleX(0.861)">Address Pool:</span>
<div class="sunk" style="left:428px;top:298px;width:132px;height:17px"><span class="t" style="left:2px;top:1px;margin-left:0.15px;transform:scaleX(0.847)">static-only</span></div><div class="dd" style="top:298px"><svg width="10" height="11" viewBox="0 0 10 11"><path d="M1.500 1h7.500v1.200H1.500zM4 3h2.500v2H9L5.250 9L1.500 5H4z" fill="#000"/></svg></div>
<div class="sep" style="top:324px"></div>
<span class="t" style="left:359.400px;top:336px;margin-left:-0.04px;transform:scaleX(0.870)">Src. Address:</span>
<div class="sunk dis" style="left:428px;top:334px;width:132px;height:17px"></div><i class="tri" style="top:339px"></i>
<span class="t" style="left:342.800px;top:362px;margin-left:-0.43px;transform:scaleX(0.877)">Delay Threshold:</span>
<div class="sunk dis" style="left:428px;top:359px;width:132px;height:18px"></div><i class="tri" style="top:365px"></i>
<div class="sep" style="top:385px"></div>
<span class="t" style="left:360.500px;top:397px;margin-left:0.40px;transform:scaleX(0.872)">Authoritative:</span>
<div class="sunk" style="left:428px;top:395px;width:132px;height:17px"><span class="t" style="left:2px;top:1px;margin-left:-0.03px;transform:scaleX(0.864)">after 2s delay</span></div><div class="dd" style="top:395px"><svg width="10" height="11" viewBox="0 0 10 11"><path d="M1.500 1h7.500v1.200H1.500zM4 3h2.500v2H9L5.250 9L1.500 5H4z" fill="#000"/></svg></div>
<span class="t" style="left:351.600px;top:422px;margin-left:-0.44px;transform:scaleX(0.884)">Bootp Support:</span>
<div class="sunk" style="left:428px;top:420px;width:132px;height:17px"><span class="t" style="left:2px;top:1px;margin-left:0.14px;transform:scaleX(0.876)">static</span></div><div class="dd" style="top:420px"><svg width="10" height="11" viewBox="0 0 10 11"><path d="M1.500 1h7.500v1.200H1.500zM4 3h2.500v2H9L5.250 9L1.500 5H4z" fill="#000"/></svg></div>
<span class="t" style="left:518px;top:447px;margin-left:-0.43px;transform:scaleX(0.873)">Lease Script:</span>
<div class="sunk2" style="left:332px;top:463px;width:247px;height:136px"></div>
<div class="a" style="left:561px;top:465px;width:16px;height:133px;background:repeating-conic-gradient(#fff 0 25%,#d4d0c8 0 50%) 0 0/2px 2px"></div>
<div class="a" style="left:561px;top:465px;width:16px;height:16px;background:#d4d0c8;border:1px solid;border-color:#fff #4c4844 #4c4844 #fff;border-right-width:2px;border-bottom-width:2px"><i class="a" style="left:2px;top:4px;border-bottom:4px solid #7c7874;border-left:4px solid transparent;border-right:4px solid transparent"></i><i class="a" style="left:3px;top:8px;width:7px;height:1px;background:#fff"></i></div>
<div class="a" style="left:561px;top:582px;width:16px;height:16px;background:#d4d0c8;border:1px solid;border-color:#fff #4c4844 #4c4844 #fff;border-right-width:2px;border-bottom-width:2px"><i class="a" style="left:2px;top:5px;border-top:4px solid #7c7874;border-left:4px solid transparent;border-right:4px solid transparent"></i></div>
<div class="cb" style="top:606px"><svg width="9" height="9" viewBox="0 0 9 9"><path d="M1 3.500L3.500 6L8 1.500" fill="none" stroke="#000" stroke-width="2"/></svg></div>
<span class="t" style="left:444px;top:606px;margin-left:0.40px;transform:scaleX(0.875)">Add ARP For Leases</span>
<div class="cb" style="top:626px"><svg width="9" height="9" viewBox="0 0 9 9"><path d="M1 3.500L3.500 6L8 1.500" fill="none" stroke="#000" stroke-width="2"/></svg></div>
<span class="t" style="left:444px;top:626px;margin-left:0.40px;transform:scaleX(0.864)">Always Broadcast</span>
<div class="cb" style="top:646px"></div>
<span class="t" style="left:444px;top:646px;margin-left:-0.40px;transform:scaleX(0.893)">Use RADIUS</span>
<div class="sk" style="left:326px;top:667px;width:331px;height:20px"><span class="t" style="left:2px;top:2px;margin-left:-0.04px;transform:scaleX(0.885)">enabled</span></div>
<!-- dialog buttons -->
<div class="a" style="left:594px;top:170px;width:60px;height:23px;border:1px solid #000"></div>
<div class="btn db" style="left:595px;top:171px;width:58px;height:21px;box-shadow:inset 1px 1px 0 #fff;border-color:#d4d0c8 #807c78 #807c78 #d4d0c8"><span class="t" style="left:19.500px;top:4px;margin-left:-0.10px;transform:scaleX(0.905)">OK</span></div>
<div class="btn db" style="left:594px;top:196px;width:59px;height:23px"><span class="t" style="left:11.500px;top:4px;margin-left:-0.14px;transform:scaleX(0.895)">Cancel</span></div>
<div class="btn db" style="left:594px;top:222px;width:59px;height:23px"><span class="t" style="left:15.500px;top:4px;margin-left:0.40px;transform:scaleX(0.806)">Apply</span></div>
<div class="btn db" style="left:594px;top:254px;width:59px;height:23px"><span class="t" style="left:11.500px;top:4px;margin-left:-0.40px;transform:scaleX(0.846)">Disable</span></div>
<div class="btn db" style="left:594px;top:280px;width:59px;height:23px"><span class="t" style="left:15.500px;top:4px;margin-left:-0.11px;transform:scaleX(0.857)">Copy</span></div>
<div class="btn db" style="left:594px;top:306px;width:59px;height:23px"><span class="t" style="left:8.500px;top:4px;margin-left:-0.44px;transform:scaleX(0.884)">Remove</span></div>

</div></body></html>
